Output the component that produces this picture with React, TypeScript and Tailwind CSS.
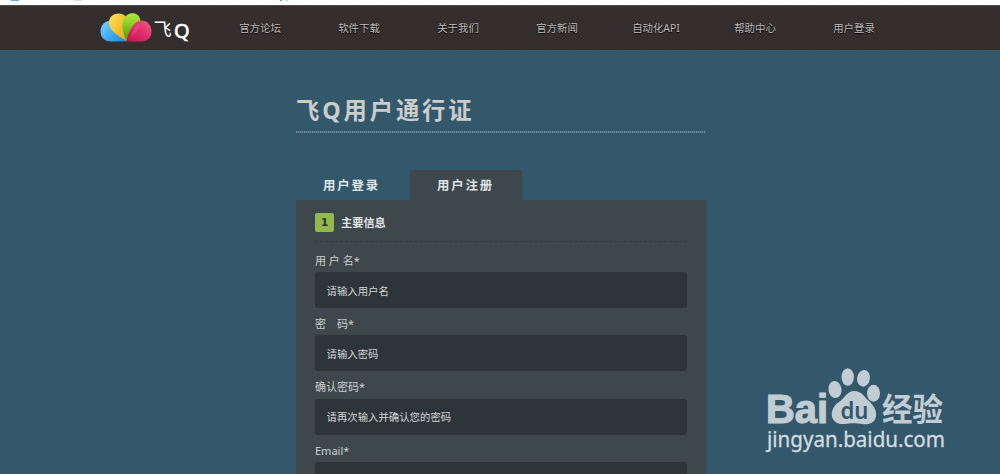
const navItems = ["官方论坛", "软件下载", "关于我们", "官方新闻", "自动化API", "帮助中心", "用户登录"];

const fields = [
  { label: "用 户 名*", placeholder: "请输入用户名" },
  { label: "密\u3000码*", placeholder: "请输入密码" },
  { label: "确认密码*", placeholder: "请再次输入并确认您的密码" },
  { label: "Email*", placeholder: "" },
];

const Logo = () => (
  <svg width="92" height="34" viewBox="0 0 92 34" className="block">
    <defs>
      <linearGradient id="blue" x1="0" y1="0" x2="1" y2="1">
        <stop offset="0" stopColor="#78d8ff" />
        <stop offset="1" stopColor="#1685dc" />
      </linearGradient>
      <linearGradient id="yellow" x1="0" y1="0" x2="1" y2="1">
        <stop offset="0" stopColor="#ffe35c" />
        <stop offset="1" stopColor="#e8a010" />
      </linearGradient>
      <linearGradient id="green" x1="0" y1="0" x2="0" y2="1">
        <stop offset="0" stopColor="#b4ec3c" />
        <stop offset="1" stopColor="#4a9c08" />
      </linearGradient>
      <linearGradient id="pink" x1="0" y1="1" x2="1" y2="0">
        <stop offset="0" stopColor="#c4104c" />
        <stop offset="0.5" stopColor="#e02c6c" />
        <stop offset="1" stopColor="#f06084" />
      </linearGradient>
    </defs>
    <path d="M27 33.5H11C4.5 33.5.5 29.500.5 23.500.5 17 5 12.500 12 12.500Z" fill="url(#blue)" />
    <path d="M27 33C18 28 9.500 22.500 9 15.500 8.600 9.500 13 5.500 18.500 5.500 25 5.500 28 10 28 15.500Z" fill="url(#yellow)" />
    <path d="M26 32C22 22 21.500 15 24 10.500 27 5 33 4 37 6.500 40 8.500 41 12 40 15Z" fill="url(#green)" />
    <path d="M26.500 33C28 26 32 16 38.500 13 45 10.500 51.500 16 51.500 23.500 51.500 30 47 33.500 41 33.500H30C28 33.500 27 33.400 26.500 33Z" fill="url(#pink)" />
    <path d="M31 29C32 24 34 18 39 15.500C39 21 36 26 31 29Z" fill="#fff" opacity="0.1" />
    <text x="53.500" y="28" fill="#fff" className="font-['Noto_Sans_CJK_SC',sans-serif] text-[18px]">飞</text>
    <text x="74" y="29.500" fill="#fff" stroke="#fff" strokeWidth="0.6" className="font-['Noto_Sans',sans-serif] text-[20px]">Q</text>
  </svg>
);

const Watermark = () => (
  <svg width="190" height="94" viewBox="0 0 190 94" className="absolute left-[762px] top-[362px]">
    <g fill="#c2ccd3">
      <ellipse cx="85.700" cy="15" rx="6.200" ry="8.800" />
      <ellipse cx="101.500" cy="16.300" rx="6.400" ry="8.400" transform="rotate(10 101.500 16.300)" />
      <ellipse cx="73" cy="27.500" rx="6.500" ry="8.600" transform="rotate(-8 73 27.500)" />
      <ellipse cx="111.500" cy="31.300" rx="6.500" ry="8.500" />
      <path d="M92 29C85 29 83 36 77 40 71 44 69 50 70 55 72 61 77 62.500 83 62 88 61 95 61 100 62 107 63 113 61 114 54 115 48 111 43 107 39 102 35 100 29 92 29Z" />
      <text x="4" y="60.500" textLength="62" lengthAdjust="spacingAndGlyphs" stroke="#c2ccd3" strokeWidth="1.200" className="font-['Liberation_Sans',sans-serif] text-[40px] font-bold">Bai</text>
      <text x="120" y="58.500" textLength="61" lengthAdjust="spacingAndGlyphs" className="font-['Noto_Sans_CJK_SC',sans-serif] text-[32px] font-bold">经验</text>
    </g>
    <text x="78.500" y="57" textLength="28" lengthAdjust="spacingAndGlyphs" fill="#33586b" className="font-['Noto_Sans',sans-serif] text-[24px] font-semibold">du</text>
    <text x="5" y="85" textLength="178" lengthAdjust="spacingAndGlyphs" fill="#d4dbe0" stroke="#d4dbe0" strokeWidth="0.3" className="font-['Noto_Sans',sans-serif] text-[21px]">jingyan.baidu.com</text>
  </svg>
);

const Header = () => (
  <header>
    <div className="flex h-[5px] items-start bg-[#fcfdfd]">
      <span className="ml-[11px] h-px w-2 bg-[#62a9ef]" />
      <span className="ml-[55px] h-px w-2 bg-[#d5d9dc]" />
      <span className="ml-[198px] h-px w-0.5 bg-[#4fc48c]" />
      <span className="ml-1 h-px w-0.5 bg-[#a5dfc4]" />
    </div>
    <div className="flex h-[45px] border-t border-[#514f4e] bg-[#322d2c] bg-[linear-gradient(135deg,#363130_25%,#2e2a29_25%,#2e2a29_50%,#363130_50%,#363130_75%,#2e2a29_75%)] bg-[length:3px_3px] pl-[100px]">
      <div className="mt-[2px] w-[110.500px]">
        <Logo />
      </div>
      <nav className="flex">
        {navItems.map((item) => (
          <a key={item} className="w-[99px] pt-[13px] text-center text-[10.400px] leading-[18px] text-[#bdbbb9] [text-shadow:0_1px_1px_#000]">
            {item}
          </a>
        ))}
      </nav>
    </div>
  </header>
);

const RegisterForm = () => (
  <form className="bg-[#3e484c] px-[19px] pt-3">
    <div className="flex h-[29.500px] items-start border-b border-dashed border-[#343d40]">
      <span className="mt-[1px] flex h-[19px] w-[19px] items-center justify-center rounded-[2px] bg-[#93b84b] pt-0.5 font-['DejaVu_Sans',sans-serif] text-[11px] font-bold text-[#2e3633]">
        1
      </span>
      <h2 className="ml-[7px] text-[11.200px] leading-[21px] font-bold text-[#e0e2e3]">主要信息</h2>
    </div>
    <div className="pt-[10px]">
      {fields.map((field) => (
        <div key={field.label} className="h-[63.400px]">
          <label className="block h-[20.500px] text-[11px] leading-[18px] whitespace-pre text-[#c9cdce]">{field.label}</label>
          <input
            type="text"
            placeholder={field.placeholder}
            className="block h-9 w-[371.500px] rounded-[3px] bg-[#2e3538] px-[11.500px] pt-px text-[10.400px] text-[#d0d3d4] placeholder:text-[#d0d3d4] placeholder:opacity-100"
          />
        </div>
      ))}
    </div>
  </form>
);

export default function App() {
  return (
    <div className="relative h-[474px] overflow-hidden bg-[#33586b] font-['Noto_Sans','Noto_Sans_CJK_SC',sans-serif]">
      <Header />
      <main className="ml-[296px] w-[409.500px]">
        <h1 className="h-[81px] pt-[42px] text-[23.300px] leading-9 font-bold tracking-[2.900px] text-[#cccccb]">
          飞Q用户通行证
        </h1>
        <div className="h-[2px] bg-[repeating-linear-gradient(90deg,#72868f_0px,#72868f_1px,#4e6c7b_1px,#4e6c7b_2px)]" />
        <div className="mt-[37px] flex h-[30px] text-[12.400px] leading-[31px] font-bold tracking-[1.900px] text-[#dfe3e5]">
          <span className="w-[114px] pl-[27px]">用户登录</span>
          <span className="w-[112px] rounded-t-[3px] bg-[#3e484c] pl-[27px]">用户注册</span>
        </div>
        <RegisterForm />
      </main>
      <Watermark />
    </div>
  );
}
